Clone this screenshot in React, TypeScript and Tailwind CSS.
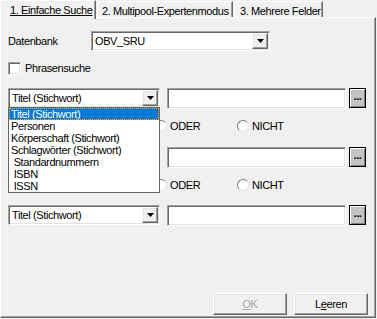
const sunken =
  'border border-t-[#a0a0a0] border-l-[#a0a0a0] border-b-white border-r-white shadow-[inset_1px_1px_0_#696969,inset_-1px_-1px_0_#e3e3e3]';
const raised =
  'border border-t-white border-l-white border-b-[#696969] border-r-[#696969] shadow-[inset_-1px_-1px_0_#a0a0a0,inset_1px_1px_0_#e3e3e3]';

function Arrow() {
  return (
    <svg width="7" height="4" viewBox="0 0 7 4">
      <path d="M0 0h7L3.5 4z" fill="#000" />
    </svg>
  );
}

function Combo({ value, width, hidden }: { value: string; width: string; hidden?: boolean }) {
  return (
    <div
      className={`${sunken} ${width} h-[20px] bg-white flex items-center ${hidden ? 'invisible' : ''}`}
    >
      <span className="flex-1 pl-[3px] whitespace-nowrap">{value}</span>
      <div
        className={`${raised} w-[16px] h-[16px] mr-[1px] bg-[#f0f0f0] flex items-center justify-center`}
      >
        <Arrow />
      </div>
    </div>
  );
}

function Radio({ label, className }: { label: string; className?: string }) {
  return (
    <div className={`flex items-center gap-[3px] ${className ?? ''}`}>
      <div className="w-[12px] h-[12px] rounded-full bg-white border border-t-[#7a7a7a] border-l-[#7a7a7a] border-b-[#e3e3e3] border-r-[#e3e3e3]" />
      <span>{label}</span>
    </div>
  );
}

function SearchRow({ covered }: { covered?: boolean }) {
  return (
    <div className="flex items-start pl-[7px]">
      <Combo value="Titel (Stichwort)" width="w-[152px]" hidden={covered} />
      <div className={`${sunken} ml-[7px] w-[179px] h-[21px] bg-white`} />
      <div className="ml-[3px] w-[17px] h-[20px] bg-[#c4c4c4] border border-black shadow-[inset_1px_1px_0_#fff,inset_-1px_-1px_0_#808080] flex items-center justify-center font-bold leading-none pb-[3px]">
        ...
      </div>
    </div>
  );
}

// the first radio sits under the open list in both rows
function RadioRow() {
  return (
    <div className="flex items-center h-[12px] pl-[8px]">
      <Radio label="UND" className="w-[146px] invisible" />
      <Radio label="ODER" className="w-[82px]" />
      <Radio label="NICHT" />
    </div>
  );
}

const options = [
  'Titel (Stichwort)',
  'Personen',
  'Körperschaft (Stichwort)',
  'Schlagwörter (Stichwort)',
  ' Standardnummern',
  ' ISBN',
  ' ISSN',
];

export default function App() {
  return (
    <div className="relative w-[377px] h-[319px] bg-[#f0f0f0] text-[11px] tracking-[-0.4px] text-black font-['Liberation_Sans',Arial,sans-serif] overflow-hidden">
      <div className="flex items-start h-[17px]">
        <div className="relative z-10 w-[96px] h-[19px] bg-[#f0f0f0] border-l border-t border-white border-r border-r-[#696969] shadow-[inset_-1px_0_0_#a0a0a0] pl-[9px] pt-[1px]">
          <span className="underline underline-offset-[1px]">1. Einfache Suche</span>
        </div>
        <div className="mt-[1px] ml-[1px] w-[136px] h-[16px] border-l border-t border-white border-r border-r-[#696969] shadow-[inset_-1px_0_0_#a0a0a0] pl-[4px] pt-[1px]">
          2. Multipool-Expertenmodus
        </div>
        <div className="mt-[1px] ml-[1px] w-[89px] h-[16px] border-l border-t border-white border-r border-r-[#696969] shadow-[inset_-1px_0_0_#a0a0a0] pl-[5px] pt-[1px]">
          3. Mehrere Felder
        </div>
      </div>

      <div className="w-[376px] h-[301px] border border-t-white border-l-white border-b-[#696969] border-r-[#696969] shadow-[inset_-1px_-1px_0_#a0a0a0] flex flex-col">
        <div className="mt-[13px] h-[20px] flex items-center">
          <span className="w-[90px] pl-[7px]">Datenbank</span>
          <Combo value="OBV_SRU" width="w-[179px]" />
        </div>

        <div className="mt-[11px] h-[13px] flex items-center pl-[7px] gap-[4px]">
          <div className={`${sunken} w-[13px] h-[13px] bg-white`} />
          <span>Phrasensuche</span>
        </div>

        <div className="mt-[13px]">
          <SearchRow />
        </div>
        <div className="mt-[11px]">
          <RadioRow />
        </div>
        <div className="mt-[15px]">
          <SearchRow covered />
        </div>
        <div className="mt-[11px]">
          <RadioRow />
        </div>
        <div className="mt-[14px]">
          <SearchRow />
        </div>

        <div className="mt-auto mb-[2px] flex justify-end gap-[7px] pr-[7px]">
          <div
            className={`${raised} w-[74px] h-[22px] flex items-center justify-center text-[#a0a0a0] [text-shadow:1px_1px_0_#fff]`}
          >
            <span>
              <u>O</u>K
            </span>
          </div>
          <div className={`${raised} w-[74px] h-[22px] flex items-center justify-center`}>
            <span>
              L<u>e</u>eren
            </span>
          </div>
        </div>
      </div>

      <div className="absolute left-[8px] top-[107px] w-[152px] h-[86px] bg-white border border-[#646464] z-20 flex flex-col">
        {options.map((o, i) => (
          <div
            key={o}
            className={`h-[12px] leading-[12px] whitespace-pre pl-[2px] ${
              i === 0
                ? 'bg-[#0078d7] text-white outline-1 outline-dotted outline-[#f5a623] -outline-offset-1'
                : ''
            }`}
          >
            {o}
          </div>
        ))}
      </div>
    </div>
  );
}
